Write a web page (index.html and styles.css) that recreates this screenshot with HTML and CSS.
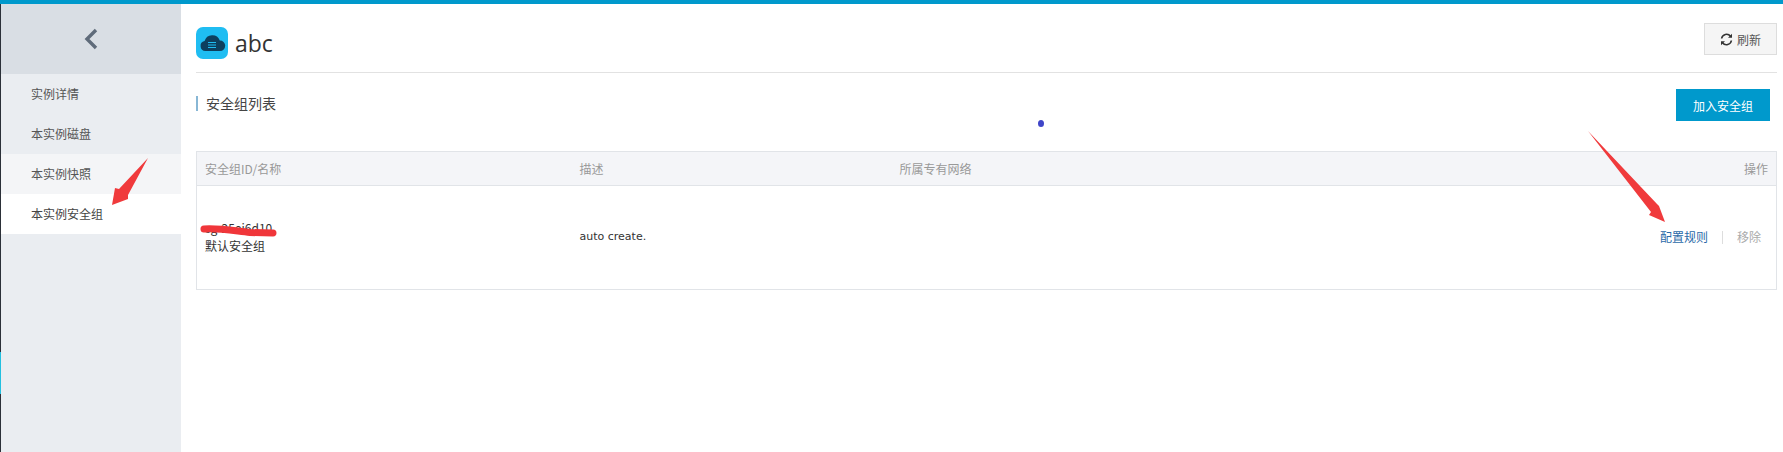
FILE: index.html
```html
<!DOCTYPE html>
<html lang="zh-CN">
<head>
<meta charset="utf-8">
<title>abc</title>
<link rel="stylesheet" href="styles.css">
</head>
<body>
<div class="topbar"></div>
<div class="layout">
  <div class="rail"><span class="rail-mark"></span></div>
  <aside class="sidebar">
    <div class="back">
      <svg width="16" height="22" viewBox="0 0 16 22"><path d="M13 2 L4 11 L13 20" fill="none" stroke="#5f6b7a" stroke-width="3.4"/></svg>
    </div>
    <nav class="menu">
      <a class="menu-item">实例详情</a>
      <a class="menu-item">本实例磁盘</a>
      <a class="menu-item menu-item-hover">本实例快照</a>
      <a class="menu-item menu-item-active">本实例安全组</a>
    </nav>
  </aside>
  <main class="main">
    <header class="title-row">
      <div class="title">
        <svg class="logo" width="32" height="32" viewBox="0 0 32 32">
          <rect width="32" height="32" rx="7" fill="#1fbdf2"/>
          <path d="M9.500 24a5 5 0 0 1-.9-9.900 8 8 0 0 1 15.200-.7 5.300 5.300 0 0 1 .2 10.600z" fill="#0d3f5e"/>
          <path d="M12 15.500h8M12 18h8M12 20.500h8" stroke="#1fbdf2" stroke-width="1"/>
        </svg>
        <h1 class="name">abc</h1>
      </div>
      <button class="refresh">
        <svg width="13" height="13" viewBox="0 0 13 13"><path d="M1.600 5.500A5 5 0 0 1 10.500 3.200M11.400 7.500A5 5 0 0 1 2.500 9.800" fill="none" stroke="#333" stroke-width="1.600"/><path d="M12 .8v4H8zM1 12.200v-4h4z" fill="#333"/></svg>
        <span>刷新</span>
      </button>
    </header>
    <section class="section-row">
      <h2 class="section-title">安全组列表</h2>
      <button class="add">加入安全组</button>
    </section>
    <table class="table">
      <thead>
        <tr>
          <th class="col-id">安全组ID/名称</th>
          <th class="col-desc">描述</th>
          <th class="col-vpc">所属专有网络</th>
          <th class="col-ops">操作</th>
        </tr>
      </thead>
      <tbody>
        <tr>
          <td class="cell-id"><div>sg-25ei6d10</div><div>默认安全组</div></td>
          <td class="cell-desc">auto create.</td>
          <td></td>
          <td class="col-ops"><a class="link">配置规则</a><span class="sep"></span><a class="muted">移除</a></td>
        </tr>
      </tbody>
    </table>
  </main>
</div>
<span class="dot"></span>
<svg class="overlay" width="1783" height="452" viewBox="0 0 1783 452">
  <path d="M148 158 L128 195 L128 199 L112 205 L115 188 L119 189 Z" fill="#f03a3c"/>
  <path d="M1588 131 L1657 204 L1659 206 L1665 222 L1649 215 L1651 212 Z" fill="#f03a3c"/>
  <path d="M204 229 C 220 228 235 231 250 232.500 L 273 233" fill="none" stroke="#f0363a" stroke-width="7" stroke-linecap="round"/>
</svg>
</body>
</html>
```
FILE: styles.css
```css
* { box-sizing: border-box; }
html, body { margin: 0; height: 100%; overflow: hidden; }
body {
  position: relative;
  background: #fff;
  color: #333;
  font-family: "Noto Sans CJK SC", "Liberation Sans", sans-serif;
  font-size: 12px;
}
.topbar { height: 4px; background: #0099cc; }
.layout { display: flex; height: 448px; }
.rail { width: 1px; background: #2b3038; position: relative; }
.rail-mark { position: absolute; left: 0; top: 348px; width: 1px; height: 42px; background: #23c0e0; }
.sidebar { width: 180px; background: #eaedf1; display: flex; flex-direction: column; }
.back { height: 70px; background: #d9dee4; display: flex; align-items: center; justify-content: center; }
.menu { display: flex; flex-direction: column; }
.menu-item { height: 40px; padding-left: 30px; line-height: 40px; color: #555; }
.menu-item-hover { background: #f4f5f7; }
.menu-item-active { background: #fff; color: #444; }
.main { flex: 1; padding: 0 6px 0 15px; }
.title-row {
  height: 69px;
  display: flex;
  justify-content: space-between;
  border-bottom: 1px solid #e2e2e2;
  padding-top: 19px;
}
.title { display: flex; align-items: center; gap: 7px; height: 36px; margin-top: 2px; }
.logo { display: block; }
.name {
  margin: 0;
  font: 400 23px "Open Sans", "Liberation Sans", sans-serif;
  color: #333;
}
.refresh {
  width: 73px;
  height: 32px;
  background: #f5f5f5;
  border: 1px solid #ddd;
  display: flex;
  align-items: center;
  justify-content: center;
  gap: 4px;
  font: 12px "Noto Sans CJK SC", sans-serif;
  color: #555;
  padding: 0;
}
.section-row {
  height: 78px;
  display: flex;
  justify-content: space-between;
  padding-right: 7px;
  padding-top: 16px;
}
.section-title {
  margin: 7px 0 0;
  height: 15px;
  border-left: 2px solid #88b7d5;
  padding-left: 8px;
  font-size: 14px;
  font-weight: 400;
  line-height: 15px;
  color: #444;
}
.add {
  width: 94px;
  height: 32px;
  background: #0099cc;
  color: #fff;
  border: 0;
  font: 12px "Noto Sans CJK SC", sans-serif;
  padding: 0;
}
.table {
  width: 100%;
  border-collapse: collapse;
  table-layout: fixed;
  border: 1px solid #e1e4e8;
}
.table th {
  height: 34px;
  background: #f4f5f8;
  border-bottom: 1px solid #e1e4e8;
  font-weight: 400;
  color: #999;
  text-align: left;
  padding: 0 8px;
}
.table td { height: 104px; padding: 0 8px 2px; color: #333; vertical-align: middle; }
.table td.cell-desc { font-family: "DejaVu Sans", sans-serif; font-size: 11px; }
.col-id { width: 375px; }
.col-desc { width: 320px; }
.col-vpc { width: auto; }
.col-ops { width: 200px; }
.table th.col-ops, .table td.col-ops { text-align: right; }
.cell-id div { line-height: 18px; }
.link { color: #2b6aa8; }
.sep { display: inline-block; width: 1px; height: 13px; background: #ddd; margin: 0 14px; vertical-align: -2px; }
.muted { color: #aaa; margin-right: 7px; }
.dot { position: absolute; left: 1038px; top: 120px; width: 6px; height: 7px; border-radius: 50%; background: #3f45c8; }
.overlay { position: absolute; left: 0; top: 0; pointer-events: none; }
```
